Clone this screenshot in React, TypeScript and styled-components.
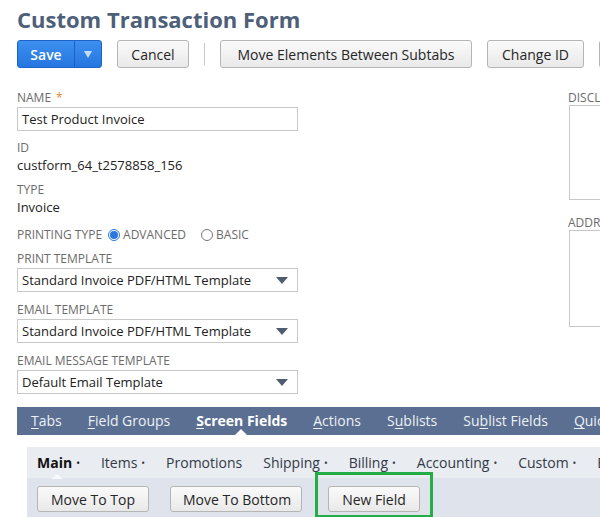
import styled, { createGlobalStyle } from 'styled-components'

const GlobalStyle = createGlobalStyle`
  html, body {
    margin: 0;
    padding: 0;
    background: #ffffff;
    font-family: "Open Sans", "Liberation Sans", sans-serif;
    overflow: hidden;
  }
  * {
    box-sizing: border-box;
  }
`

const Page = styled.div`
  width: 600px;
  height: 517px;
  overflow: hidden;
  padding: 4px 0 0 17px;
`

const Title = styled.h1`
  margin: 0;
  font-size: 22px;
  line-height: 30px;
  font-weight: 700;
  color: #4d5f79;
  white-space: nowrap;
`

const Toolbar = styled.div`
  display: flex;
  align-items: center;
  gap: 15px;
  margin-top: 6px;
  height: 28px;
  white-space: nowrap;
`

const Button = styled.button<{ $w?: number; $h?: number }>`
  flex: none;
  height: ${({ $h }) => $h ?? 28}px;
  width: ${({ $w }) => ($w ? `${$w}px` : 'auto')};
  padding: 0 12px;
  border: 1px solid #b5b5b5;
  border-radius: 3px;
  background: linear-gradient(#fafafa, #e9e9e9);
  font-family: inherit;
  font-size: 14px;
  color: #262626;
  white-space: nowrap;
`

const SaveGroup = styled.div`
  display: flex;
  flex: none;
  height: 28px;
  border: 1px solid #1b64c8;
  border-radius: 3px;
  overflow: hidden;
  background: linear-gradient(#3d8ff0, #2676e0);
`

const SaveMain = styled.div`
  width: 56px;
  display: flex;
  align-items: center;
  justify-content: center;
  color: #ffffff;
  font-size: 14px;
  font-weight: 600;
`

const SaveArrow = styled.div`
  width: 27px;
  border-left: 1px solid #1b5fbf;
  display: flex;
  align-items: center;
  justify-content: center;

  &::after {
    content: '';
    border-left: 4px solid transparent;
    border-right: 4px solid transparent;
    border-top: 7px solid #c9dcf7;
  }
`

const Divider = styled.div`
  width: 1px;
  height: 22px;
  background: #c8c8c8;
  flex: none;
`

const FormArea = styled.div`
  display: flex;
  gap: 270px;
  margin-top: 22px;
`

const Column = styled.div<{ $w?: number }>`
  width: ${({ $w }) => ($w ? `${$w}px` : 'auto')};
  flex: ${({ $w }) => ($w ? 'none' : '1')};
  display: flex;
  flex-direction: column;
  min-width: 0;
`

const Field = styled.div<{ $gap?: number }>`
  display: flex;
  flex-direction: column;
  margin-bottom: ${({ $gap }) => $gap ?? 8}px;
`

const Label = styled.div`
  font-size: 12px;
  line-height: 16px;
  color: #6b6b6b;
  text-transform: uppercase;
  white-space: nowrap;
  margin-bottom: 1px;
`

const Star = styled.span`
  color: #e58a1f;
  margin-left: 5px;
`

const Value = styled.div`
  font-size: 13px;
  line-height: 17px;
  color: #222222;
`

const Input = styled.div`
  height: 24px;
  border: 1px solid #c9c9c9;
  padding: 0 4px;
  display: flex;
  align-items: center;
  font-size: 13px;
  color: #222222;
`

const Select = styled(Input)`
  justify-content: space-between;

  &::after {
    content: '';
    margin-right: 5px;
    border-left: 6px solid transparent;
    border-right: 6px solid transparent;
    border-top: 7px solid #4f5d70;
  }
`

const RadioRow = styled.div`
  display: flex;
  align-items: center;
  font-size: 12px;
  line-height: 16px;
  color: #6b6b6b;
  white-space: nowrap;
`

const Radio = styled.span<{ $on?: boolean }>`
  width: 12px;
  height: 12px;
  border-radius: 50%;
  border: 1px solid ${({ $on }) => ($on ? '#2a78e0' : '#777')};
  margin: 0 3px 0 ${({ $on }) => ($on ? 6 : 15)}px;
  display: inline-flex;
  align-items: center;
  justify-content: center;

  &::after {
    content: '';
    width: 8px;
    height: 8px;
    border-radius: 50%;
    background: ${({ $on }) => ($on ? '#2a78e0' : 'transparent')};
  }
`

const Box = styled.div<{ $h: number }>`
  height: ${({ $h }) => $h}px;
  margin: -2px 0 0 1px;
  border: 1px solid #c9c9c9;
  border-right: none;
`

const TabBar = styled.div`
  display: flex;
  align-items: center;
  height: 28px;
  margin-top: 13px;
  background: #5a6f91;
  white-space: nowrap;
`

const Tab = styled.div<{ $active?: boolean }>`
  position: relative;
  flex: none;
  padding: 0 12px 0 14px;
  height: 28px;
  line-height: 28px;
  font-size: 14px;
  font-weight: ${({ $active }) => ($active ? 700 : 400)};
  color: ${({ $active }) => ($active ? '#ffffff' : '#eef1f6')};

  &::after {
    content: '';
    display: ${({ $active }) => ($active ? 'block' : 'none')};
    position: absolute;
    left: 50%;
    bottom: 0;
    margin-left: -6px;
    border-left: 6px solid transparent;
    border-right: 6px solid transparent;
    border-bottom: 6px solid #ffffff;
  }
`

const Key = styled.span`
  text-decoration: underline;
  text-underline-offset: 2px;
`

const SubPanel = styled.div`
  margin: 12px 0 0 10px;
  background: #dfe4ec;
  height: 80px;
`

const SubTabs = styled.div`
  display: flex;
  align-items: center;
  height: 31px;
  padding-left: 10px;
  background: #e9ecf1;
  white-space: nowrap;
`

const SubTab = styled.div<{ $active?: boolean }>`
  position: relative;
  flex: none;
  margin-right: 21px;
  font-size: 14px;
  line-height: 31px;
  color: ${({ $active }) => ($active ? '#111' : '#333a46')};
  font-weight: ${({ $active }) => ($active ? 700 : 400)};

  &::after {
    content: '';
    display: ${({ $active }) => ($active ? 'block' : 'none')};
    position: absolute;
    left: 14px;
    bottom: 0;
    border-left: 6px solid transparent;
    border-right: 6px solid transparent;
    border-bottom: 5px solid #f8f9fb;
  }
`

const Dot = styled.span`
  font-size: 10px;
  margin-left: 4px;
  font-weight: 400;
  vertical-align: 1px;
`

const ActionRow = styled.div`
  display: flex;
  align-items: center;
  gap: 21px;
  padding: 8px 0 0 10px;
`

const Highlight = styled.div`
  position: relative;
  margin-left: 5px;

  &::before {
    content: '';
    position: absolute;
    left: -13px;
    top: -14px;
    right: -13px;
    bottom: -6px;
    border: 3px solid #22ad45;
    pointer-events: none;
  }
`

const subtabs: [string, boolean][] = [
  ['Items', true],
  ['Promotions', false],
  ['Shipping', true],
  ['Billing', true],
  ['Accounting', true],
  ['Custom', true],
  ['E', false],
]

export default function App() {
  return (
    <Page>
      <GlobalStyle />
      <Title>Custom Transaction Form</Title>
      <Toolbar>
        <SaveGroup>
          <SaveMain>Save</SaveMain>
          <SaveArrow />
        </SaveGroup>
        <Button $w={72}>Cancel</Button>
        <Divider />
        <Button $w={252}>Move Elements Between Subtabs</Button>
        <Button $w={97}>Change ID</Button>
        <Button>Reset</Button>
      </Toolbar>

      <FormArea>
        <Column $w={281}>
          <Field $gap={9}>
            <Label>
              Name<Star>*</Star>
            </Label>
            <Input>Test Product Invoice</Input>
          </Field>
          <Field $gap={8}>
            <Label>ID</Label>
            <Value>custform_64_t2578858_156</Value>
          </Field>
          <Field $gap={11}>
            <Label>Type</Label>
            <Value>Invoice</Value>
          </Field>
          <Field $gap={8}>
            <RadioRow>
              PRINTING TYPE<Radio $on />ADVANCED<Radio />BASIC
            </RadioRow>
          </Field>
          <Field $gap={10}>
            <Label>Print Template</Label>
            <Select>Standard Invoice PDF/HTML Template</Select>
          </Field>
          <Field $gap={10}>
            <Label>Email Template</Label>
            <Select>Standard Invoice PDF/HTML Template</Select>
          </Field>
          <Field $gap={0}>
            <Label>Email Message Template</Label>
            <Select>Default Email Template</Select>
          </Field>
        </Column>
        <Column>
          <Field $gap={15}>
            <Label>Disclaimer</Label>
            <Box $h={95} />
          </Field>
          <Field $gap={0}>
            <Label>Address</Label>
            <Box $h={97} />
          </Field>
        </Column>
      </FormArea>

      <TabBar>
        <Tab>
          <Key>T</Key>abs
        </Tab>
        <Tab>
          <Key>F</Key>ield Groups
        </Tab>
        <Tab $active>
          <Key>S</Key>creen Fields
        </Tab>
        <Tab>
          <Key>A</Key>ctions
        </Tab>
        <Tab>
          S<Key>u</Key>blists
        </Tab>
        <Tab>
          Su<Key>b</Key>list Fields
        </Tab>
        <Tab>
          <Key>Q</Key>uick Search
        </Tab>
      </TabBar>

      <SubPanel>
        <SubTabs>
          <SubTab $active>
            Main<Dot>•</Dot>
          </SubTab>
          {subtabs.map(([name, dot]) => (
            <SubTab key={name}>
              {name}
              {dot && <Dot>•</Dot>}
            </SubTab>
          ))}
        </SubTabs>
        <ActionRow>
          <Button $w={112} $h={26}>Move To Top</Button>
          <Button $w={132} $h={26}>Move To Bottom</Button>
          <Highlight>
            <Button $w={92} $h={26}>New Field</Button>
          </Highlight>
        </ActionRow>
      </SubPanel>
    </Page>
  )
}
